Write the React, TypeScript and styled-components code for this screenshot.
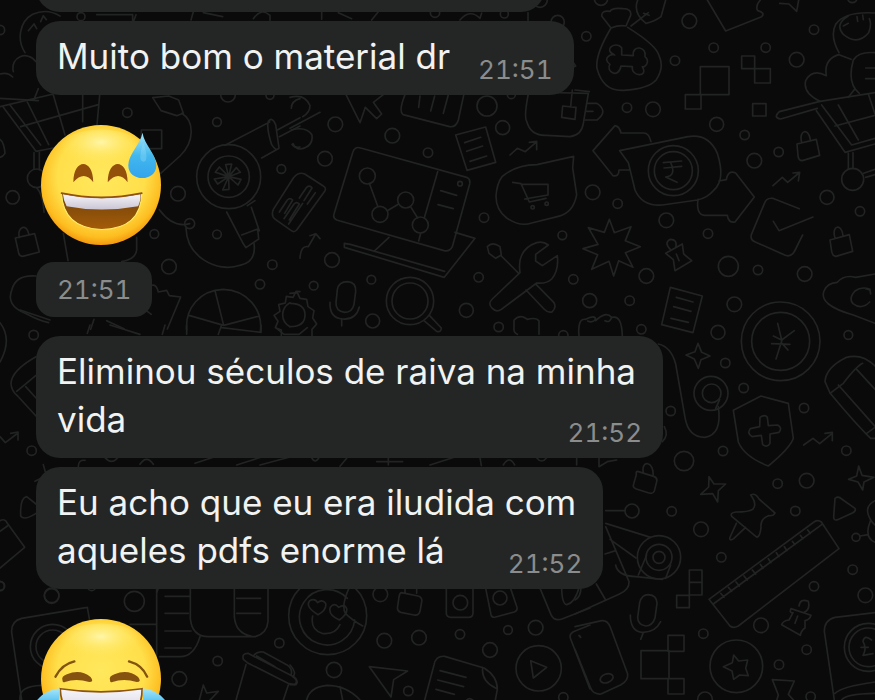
import React from "react";
import styled, { createGlobalStyle, css } from "styled-components";

const GlobalStyle = createGlobalStyle`
  body {
    margin: 0;
    background: #0a0a0a;
    font-family: Inter, "Liberation Sans", sans-serif;
  }
`;

const Screen = styled.main`
  position: relative;
  height: 100vh;
  overflow: hidden;
  background: #0a0a0a;
`;

const Backdrop = styled.svg`
  position: absolute;
  inset: 0;
  width: 100%;
  height: 100%;
  fill: none;
  stroke: #222323;
  stroke-width: 5;
  stroke-linecap: round;
  stroke-linejoin: round;
`;

const Messages = styled.ol`
  position: relative;
  display: flex;
  flex-direction: column;
  align-items: flex-start;
  gap: 9px;
  margin: 0;
  padding: 0 36px;
  list-style: none;
`;

const surface = css`
  background: #242626;
  color: #f1f2f2;
`;

const Bubble = styled.li`
  ${surface}
  box-sizing: border-box;
  padding: 11px 21px 15px;
  border-radius: 24px;
`;

const EarlierBubble = styled(Bubble)`
  width: 509px;
  max-width: 100%;
  height: 51px;
  margin-top: -39px;
`;

const Line = styled.span`
  display: block;
  padding-right: 6px;
  font-size: 35px;
  line-height: 48px;
  white-space: nowrap;
`;

const LastRow = styled.div`
  display: flex;
  align-items: flex-end;
  justify-content: space-between;
  gap: 22px;
`;

const Time = styled.time`
  color: #8b8d8d;
  font-size: 26px;
  line-height: 20px;
  font-variant-numeric: tabular-nums;
`;

const EmojiMessage = styled.li`
  display: flex;
  flex-direction: column;
  align-items: flex-start;
  gap: 17px;
  margin: 21px 0 10px;
`;

const EmojiArt = styled.svg`
  width: 120px;
  height: 120px;
  margin-left: 5px;
  overflow: visible;
`;

const TimePill = styled.div`
  ${surface}
  display: flex;
  align-items: center;
  height: 55px;
  padding: 0 21px;
  border-radius: 18px;
`;

type Dot = [number, number, number];

function Dots({ items }: { items: Dot[] }) {
  return (
    <>
      {items.map(([x, y, r]) => (
        <circle key={`${x}-${y}`} cx={x} cy={y} r={r} />
      ))}
    </>
  );
}

const topLeft: Dot[] = [
  [0, 90, 14], [243, 50, 12], [382, 338, 14], [651, 366, 13], [844, 507, 13], [38, 592, 20],
  [534, 581, 22], [463, 702, 13], [651, 703, 13], [507, 800, 22], [817, 794, 14],
  [780, 853, 14], [684, 284, 22], [810, 286, 12], [569, 671, 15], [110, 535, 28],
];

const topCentre: Dot[] = [
  [136, 373, 22], [307, 407, 22], [414, 458, 14], [105, 476, 22], [591, 318, 30],
  [638, 383, 21], [582, 653, 14], [817, 706, 13], [126, 780, 22], [244, 839, 13],
  [71, 857, 13], [248, 963, 21], [566, 832, 14], [850, 838, 14], [529, 931, 21],
  [626, 981, 14], [435, 38, 14], [643, 42, 12], [803, 66, 20], [750, 0, 22],
  [820, 1006, 14], [664, 284, 12],
];

const topRight: Dot[] = [
  [343, 63, 22], [34, 109, 14], [416, 143, 14], [572, 143, 14], [300, 182, 14],
  [717, 89, 14], [665, 179, 22], [156, 323, 14], [234, 328, 22], [425, 373, 21],
  [509, 405, 14], [611, 456, 14], [538, 482, 22], [53, 577, 22], [128, 611, 14],
  [756, 592, 21], [855, 634, 14], [274, 661, 22], [399, 701, 14], [460, 799, 30],
  [549, 810, 14], [689, 822, 22], [214, 828, 22], [44, 902, 21], [164, 902, 14],
  [478, 913, 22], [429, 997, 21], [199, 988, 14], [820, 1005, 13], [78, -4, 20],
  [832, -6, 14],
];

const bottomRight: Dot[] = [
  [451, 99, 14], [506, 174, 14], [287, 243, 14], [687, 234, 14], [444, 363, 14],
  [814, 362, 14], [327, 393, 29], [608, 461, 14], [695, 452, 22], [171, 543, 21],
  [290, 544, 14], [378, 598, 22], [661, 543, 14], [439, 682, 14], [833, 719, 14],
  [717, 769, 14], [871, 796, 22], [558, 886, 22], [385, 911, 14], [695, 959, 14],
  [612, 1004, 14], [843, 622, 12], [390, 1108, 22], [707, 1100, 14],
];

function Wallpaper() {
  return (
    <Backdrop viewBox="0 0 875 700" preserveAspectRatio="xMinYMin slice" aria-hidden="true">
      <g transform="scale(.33333)">
        <Dots items={topLeft} />
        {/* face, cloud and shopping cart */}
        <path d="M75 158C50 120 58 65 98 43Q140 24 180 48M85 92l17-20 8 14M122 65l8-18 9 12M40 215C30 170 82 150 108 185M0 222Q23 215 38 231M0 295l115 7M115 266l-12 30M0 320L160 282M10 322L108 454L160 444M30 315l92 120M62 380L295 314M82 306l64 128M160 285l35 120M248 285v80M299 285l-8 90M102 458v50M118 458v52M110 563q20 22 22 74" />
        <path d="M290 44h108v22M400 66l8-22M573 60l7-25M610 38l58 12M760 56q24-34 50-10v15" />
        <path d="M0 418q12 8 15 42-6 10-15 12M46 714l58-13 14 55-50 13q-10 0-12-10zM58 712c-8-30 22-45 29-8M424 390h61v56h-61zM190 700l14 82M410 712v38q-3 28-45 35" />
        {/* cable and plug */}
        <path d="M458 293l48-5 30 12 14 40-20 7-47-15zM545 340C583 362 585 425 540 468L482 520M478 629Q520 685 569 671M558 684C560 770 650 820 720 796q50-10 42-66" />
        {/* hair dryer */}
        <circle cx="686" cy="530" r="96" /><circle cx="686" cy="530" r="62" />
        <path d="M686 530l-9-36 18-2-9 38 23-27 12 14-35 13 37 8-9 17-28-25 1 38-19 2 18-40-33 22-10-15 43-7-40-13 12-16zM675 436l134-70M785 474l44-25M805 364q12-15 22 10l10 70q-8 12-22-10q-16-50-10-70zM832 390l68-37M838 410l62-32M874 325q0-22 26-29M876 433q8 12 24 8M680 636l48 92M754 622l24 70M728 728l10 15 38-26-3-30-48 18M742 617l23-15" />
        {/* torn paper and pie chart */}
        <path d="M108 828q-60-5-72 40-20 48 40 72 40 22 70 28M455 856q15-4 20 20l25-5 8 16 34 4-40 96M434 928l20 15M272 988l10-30M320 962l52 24" />
        <path d="M560 990C555 925 600 870 670 868C740 870 790 928 781 995M645 872l26 104-104-30M671 976l108-28" />
        <path d="M900 875l-12-1-9 18-20-3-3 20-20 5 4 20-18 12 12 18-8 19 18 7v24h20l4 20h20M870 908q-22 12-22 36t22 36" />
      </g>

      <g transform="translate(290 0) scale(.33333)">
        <Dots items={topCentre} />
        <path d="M95 36v22M145 38l40 18M245 60l20-25M510 60q30-35 60-5l5-16M714 38v24M847 184l10 14-12 6" />
        <path d="M0 292q45-12 60 25 0 20-22 33M0 385l90-48M4 390q45-12 62 15 4 35-35 42-15 0-22-16" />
        <path d="M168 284l42 84 16-46 34 34 15-14-25-35 30-23M345 284q-20 50-6 60l140 36q20 2 26-20l16-74M390 288l-4 34M434 288l-12 45M475 284l-15 56M716 276q-15 75-6 88 12 45 60 42l70 4q35-5 40-40l15-90zM847 270l-5 50M818 318l40 4-3 36-40-6z" />
        {/* receipt, trend line, cart in speech bubble */}
        <path d="M497 405l90-24 30 106-86 24zM524 428l48-16M530 454l48-16M540 484l50-16M660 465l22-20 24 10 32-28M718 427l22-3v25M636 530q40-35 105-36l110-25-3 35 12 80q-10 55-55 65l-80 20q-35 12-75-15-32-24-32-65 2-38 18-59zM668 547l25 4 25 55 50-11M696 553h78v32l-70 12" />
        <circle cx="728" cy="622" r="5" /><circle cx="770" cy="611" r="5" />
        {/* laptop with node chart */}
        <path d="M188 458q5-20 24-14l318 88q12 5 9 20l-52 188q-8 16-25 12L140 660q-12-6-8-18zM443 515l-40 138M238 550l25 68M292 632l34-20M363 622l20 32M392 700l-6 23M452 572l48 14M444 614l46 12M495 697l60 18-92 117-300-90v-12l18 3 283 81M297 712l-45 42" />
        <circle cx="232" cy="528" r="24" /><circle cx="270" cy="643" r="24" /><circle cx="347" cy="600" r="24" /><circle cx="391" cy="675" r="24" /><circle cx="510" cy="551" r="7" />
        {/* wrench and brush */}
        <path d="M592 740q15-17 38 0l4 25-17 10-20-15zM634 768l50 50M690 818q-10-70 50-90 20-5 35 7l-38 28v20l20 14 45-30q5 45-17 70-15 15-45 12L634 928q-15 10-27-3-15-14 0-28zM738 853l54 55q8 15-5 27-13 5-25-8l-54-57" />
        {/* comb-shaped chip and trend arrow */}
        <path d="M-50 628L10 534q16-20 34-12l56 36q10 6 4 16L20 690q-8 8-16 2l-48-34q-14-10-6-30zM-32 636l24-36q8-8 16 0l-24 40M-18 656l30-44q8-8 16 0l-30 48M-4 672l42-62M28 594l22-32q10-8 16 2l-24 38M52 612l24-34M30 775q2-40 25-35l22-38M60 707l17-6 13 15" />
        {/* gear, microphone, magnifier, folder */}
        <path d="M0 880l22-2 8 17 20 3 4 22 18 12-4 22 12 18-14 16v22l-23 8-8 15-35-3M0 910q45 0 45 35T0 980M173 845q26 2 24 30l-5 38q-5 24-28 24-28-4-26-30l4-38q4-24 31-24zM120 907q-2 48 38 50 40 3 50-36M155 958v20" />
        <circle cx="360" cy="903" r="71" /><circle cx="360" cy="903" r="54" />
        <path d="M402 962l38 32q14 4 14-10l-36-38M682 1003q-12-5-10-20v-22q12-14 28-10l12 7q28-7 35 5v40" />
      </g>

      <g transform="translate(575 0) scale(.33333)">
        <Dots items={topRight} />
        {/* bone bag */}
        <path d="M108 84L80 48q0-18 25-14 5-12 40-8 25 0 22 20l-14 32q-20-4-45 6Q60 165 66 205q18 70 80 66 75-5 98-32 25-38 8-72-6-30-94-85M168 78l52-40M188 0q-15 40 25 70 25-5 45-20l14-50M206 40l16 6" />
        <path d="M140 165l35 2c-5-34 42-28 35 3 18 16-2 34-8 30 20 34-35 30-30 0l-34-2c-8 42-48 14-33-5-28-20 10-34 14-28-38-16 4-44 21-22z" />
        <path d="M397 0l55 93 108-43q12-12-12-18-8-14 8-32M614 10l28 2 23 22 6-34" />
        <path d="M376 200h86v84h-86zM331 284h47v43h-47zM500 168h39v38h-39zM539 206h47v43h-47zM533 311h40v37h-40z" />
        <path d="M0 270l43 5M36 310h30q35 24 0 50H30M34 334h20" />
        {/* face with thumbs */}
        <path d="M792 158q-28-50-10-85 28-40 118-34M820 48q-42 25-15 55 42 35 76-5 10-25 2-42M805 78l15-8M846 50l2 14M863 45l2 14M735 304q-52-25-43-62 20-37 62-15-8-50 38-63l36 14M900 158q-50-4-65 22-20 70 18 100M872 204h28M872 236h28M840 266l-20 26" />
        {/* cart */}
        <path d="M900 278L735 304L613 335q-20 18 4 22l110-32M740 315l90 120 70-20M724 332l86 125 90-25M780 378l120-32M790 315l60 105M880 282l20 60M820 460v48M834 458v48M866 520l34-12M872 532l28-8" /><circle cx="833" cy="538" r="33" />
        {/* rupee tag with arrows */}
        <path d="M228 425q-6-26-22-26h-68q-5-20-18-22L54 452l60 75q18 4 18-17h30M134 452l205-42q62-10 88 50 25 80-10 110-20 24-50 30l-105 15q-60 5-82-45l-20-82zM432 543l22-4q5-30 28-20l56 72-58 75q-20 4-23-20h-70q-24-4-18-48" />
        <circle cx="295" cy="512" r="75" /><circle cx="295" cy="512" r="57" />
        <path d="M265 488l55-5M267 504l53-5M286 486q20 40-14 45l34 16" />
        {/* checkbox, padlocks, trend */}
        <path d="M673 626l-80-31q-20-2-25 16l-39 93q-4 16 12 22l90 40q18 6 28-13l24-48M595 664l17 28 102-41M594 557l28-25 16 15 34-28M654 519l20-2-4 26M666 432l58-14 10 48-52 16q-12 0-13-15zM680 428c-10-40 22-45 26-8M765 720l58-16 10 50-50 15q-10 0-13-15zM780 714c-12-38 20-45 24-8" />
        {/* star burst and clip */}
        <path d="M103 658l15 40 50-18-17 42 45 18-45 18 23 44-43-20-15 46-14-44-52 24 18-44-44-18 45-13-29-50 48 14zM286 748q-20-20 0-30 22 0 16 25M272 760l50-28 4 30 24 20-50 30-5-33zM304 762l8 20" />
        {/* receipt, coin, calendar, cloud */}
        <path d="M286 862l96 26-28 110-94-24zM304 892l50 14M296 920l52 14M288 955l52 12M12 1008q-5-54 20-50 28-15 30 0-10 12-24 5M62 962q30-30 48-10-5 18-20 10M112 952q28-8 30 56M900 970l-65-25q-105-30-88-72 10-25 40-26 20-24 55-15l58-10M885 868q-25-10-45 5-20 22-6 38 25 20 50-5M872 866l13 4 2 12" />
        <circle cx="617" cy="1024" r="118" /><circle cx="617" cy="1024" r="87" />
        <path d="M608 970l12 50 38-28M620 1020l-25-12M590 1031l55 2M621 1020l-18 57M621 1030l18 20" />
      </g>

      <g transform="translate(575 330) scale(.33333)">
        <Dots items={bottomRight} />
        <path d="M250 42q38 8 52 60l28 160q10 60 60 60 52-8 40-92M369 40l11 27 25 11-27 11-8 26-12-28-25-12 27-10z" />
        <circle cx="408" cy="190" r="51" /><circle cx="410" cy="190" r="28" />
        <path d="M422 236l12-28M268 290q14 26-6 45M72 385v25l25-15 28-5" />
        {/* shield */}
        <path d="M558 198l82 22 15 105q-10 30-75 83-72-28-90-72l-15-95zM555 262q15-10 22 0l3 25 28-2q15 8 4 22l-27 5v28q-8 14-22 4l-4-28-28 4q-16-10-5-24l28-6z" />
        {/* marker */}
        <path d="M900 108q-40-40-88-25-60 30-62 72l15 34q80 96 122 136h13M765 190l40-30q38-50 58-60M790 165l110 124M845 118l55 60M875 310l25-18M686 345l28-20 20 16 34-28M750 310l22-3v25" />
        {/* padlock, sparkles, pin, ruler */}
        <path d="M188 424l48 15q12 4 9 16l-7 28q-4 10-16 6l-38-12q-12-4-8-15l8-28q-2-10 4-10zM205 428c-8-40 34-35 29 10M402 440l15 22 35 0-22 20-2 34-15-25-36 2 24-22zM851 408l10 28 36 6-30 14-4 24-14-24-28-8 24-10z" />
        <path d="M527 495q15-8 25 12l48 42q-5 10-20 8-25 10-22 35-2 25-12 30l-75-62q-8-12 12-14 38 0 50-8 15-15-6-43zM484 580l-20 44q0 10 12 2l36-34M402 808l315-232q12-8 22 0l53 80-302 232q-15 8-25 0zM415 822l325-238M437 790l10 12M460 772l10 12M483 756l10 12M507 738l10 12M532 720l10 12M556 703l8 12M580 686l8 12M604 668l8 12M628 650l8 12M652 634l8 10M676 616l8 10M698 600l8 10" />
        <path d="M780 505q10-8 20 2l40 28q4 8-8 14l-44 20q-12 4-12-8zM900 512q-40 20-8 65l8 8M886 573q-20 50 14 64M855 618l25-4" />
        {/* camera */}
        <circle cx="252" cy="682" r="65" /><circle cx="252" cy="682" r="39" /><circle cx="252" cy="682" r="18" />
        <path d="M92 542h58M92 580l135 42M92 590l70 165q2 24-30 38L0 852M105 628l78 56M90 672l32-10M122 705q5 32 60 35l80 8M190 735l25-60M272 745l15-40M64 762l28 48" />
        {/* blocks, mic, phone, badge */}
        <path d="M343 720h38v75h-38zM343 757h38M305 796h38v37h-38zM198 962h84v84h-84zM279 916h48v48h-48zM279 1046h48v46h-48zM220 794q26 2 26 26l-6 44q-8 24-28 24-24-4-24-26l6-44q6-24 26-24zM166 855q0 48 34 52 40 2 57-32M205 908l-8 20M0 890l80-18q18-2 26 20l52 140q2 20-20 32l-60 28q-24 2-32-20L0 958M12 916l4 4" />
        <ellipse cx="95" cy="1045" rx="20" ry="13" transform="rotate(-20 95 1045)" />
        <circle cx="484" cy="1009" r="79" />
        <path d="M476 975l15 18 27-3-6 25 8 22-26-2-18 13-5-25-26-13 27-12zM0 810q18-10 18-40" />
        <path d="M648 836l60 20q-4 14-18 16v22q-12 8-14 22l-56-32q4-12 22-14l12-22q-12 2-6-12zM672 828q4-24 28-14 6 25-12 32M668 858l-8 22M592 1049l66 4-18 40 18 20M592 1049l18 46-6 20" />
        {/* pound note */}
        <path d="M900 848l-120 14q-32 8-32 42l30 206M780 1090q20-20 120-34M800 1110q10-18 100-20" /><circle cx="880" cy="952" r="72" /><circle cx="880" cy="952" r="58" />
        <path d="M890 930q-22-18-26 4 12 22 0 42l30-5M858 952h22" />
      </g>

      <g transform="translate(0 310) scale(.33333)">
        <Dots items={[[101, 75, 14], [95, 422, 14], [0, 828, 14], [155, 858, 22]]} />
        <path d="M60 0l90 30M0 38q38 50 0 118M108 140q-75 42-75 82 2 22 20 36l55 60M50 244l58-48M77 230l31 34M0 380l16 18 34-26M32 370l22-4v24M130 464l6 22 14 8M105 514l15-8M62 618q-2-55 18-58l28 22M62 618q10 15 46-8M0 632q15-8 22 8l52 72-74 62M0 664l22-16" />
      </g>

      <g transform="translate(0 570) scale(.33333)">
        <Dots items={[[155, 76, 22], [403, 94, 30], [0, 48, 13], [653, 273, 14], [838, 219, 14], [538, 327, 22], [275, 50, 12]]} />
        <path d="M262 112L65 145q-32 8-30 42l30 203M262 112l8 45M60 388q-4-40 65-42M390 163h78M470 55v200M470 70q4-16 10-18M495 79h76M495 130h70M495 183h78M495 234h78M571 50v95q5 55 55 55h140q35-10 38-45V50M703 50v90q4 50 50 58M710 85h72M710 130h72M600 200q-18 60-60 60h-62" />
        <circle cx="158" cy="230" r="67" /><circle cx="158" cy="230" r="50" />
        <path d="M730 268q-5-18 14-18l140 72q12 8 0 22l-20-4-122-62zM760 258q10-15 30-12l70 38q18 12 14 28M738 284l-30 106M865 345l-15 45M770 258l55 32M610 345l10 24 35-5-25 26M610 345l-12 45" />
      </g>

      <g transform="translate(290 570) scale(.33333)">
        <Dots items={[[271, 73, 22], [283, 212, 22], [387, 203, 22], [510, 193, 14], [654, 180, 13], [737, 173, 22], [600, 240, 22], [132, 300, 23], [355, 363, 14], [820, 382, 14], [511, 98, 22], [630, 84, 21]]} />
        <circle cx="113" cy="137" r="117" />
        <path d="M172 85a83 83 0 1 0 22 65M178 52q-25 54-12 78 20 20 52 38M84 134q-40-24-25-42 16-8 24 6 12-12 24 2 4 20-23 34zM148 150q-35-16-27-38 12-16 25 0 18-12 24 4 4 16-22 34zM68 138q-8 40 28 52 40 5 54-26M345 50v20M380 50v20M334 68l50 10q14 4 11 18l-5 28q-4 14-18 11l-40-8q-12-4-9-18l4-28q2-12 7-13zM469 50v80q0 12 14 12h52q14 0 14-14V50M586 50l17 84q3 10 14 7l56-15q10-4 8-14L660 50M748 50l35 84q10 22 35 12l82-32M815 50q0 50 15 54 25-6 38-54" />
        <path d="M0 285q22 24 8 35 20 14 10 24H0M238 290l115 13-42 26-8 52zM50 390q8-38 60-44 60 0 100 44M150 350l8 40M404 390l28-105q5-28 32-26l118 35q40 24 40 64l-6 32M578 292q-5 42 40 63M450 302l78 20M443 330l78 20M438 358l55 15M900 165l-50 20q-14 8-8 22l58 150M868 198l4 4" />
        <circle cx="746" cy="295" r="68" /><path d="M722 272l8 52 40-32z" />
        <path d="M530 390q8-8 18 0" />
      </g>
      {/* slivers visible between the bubbles */}
      <g transform="translate(30 325) scale(.33333)">
        <path d="M180 0l-8 25M240 0l90 28M405 0l-8 28M470 0v28M575 0l-10 28M575 8l118 14V0M740 10l22 18h45l25-20M145 424q0-20 20-18M225 398q20 22 38 0M330 418q20-30 40 0M495 415l55-18M620 420l75-24M690 420l90-24M845 398q10 20 22 0" />
        <path d="M930 424l20-24M1040 410h78M1075 400v20M1200 420l75-24M1350 398l4 24M1420 420q18-30 34 0M1520 398q15 20 30 0M1640 400v20" />
      </g>
    </Backdrop>
  );
}

function FaceGradients({ id }: { id: string }) {
  return (
    <>
      <radialGradient id={`${id}-face`} cx=".5" cy=".43" r=".59">
        <stop offset="0" stopColor="#ffe85d" />
        <stop offset=".62" stopColor="#ffdf4a" />
        <stop offset=".86" stopColor="#fdbd20" />
        <stop offset="1" stopColor="#f28b08" />
      </radialGradient>
      <radialGradient id={`${id}-shine`} cx=".5" cy=".3" r=".5">
        <stop offset="0" stopColor="#fff6a8" />
        <stop offset="1" stopColor="#ffe75b" stopOpacity="0" />
      </radialGradient>
      <linearGradient id={`${id}-water`} x1="0" y1="0" x2="0" y2="1">
        <stop offset="0" stopColor="#a7e7fa" />
        <stop offset=".5" stopColor="#43b8ee" />
        <stop offset="1" stopColor="#32a4ed" />
      </linearGradient>
      <linearGradient id={`${id}-teeth`} x1="0" y1="0" x2="0" y2="1">
        <stop offset="0" stopColor="#f7f5fb" />
        <stop offset="1" stopColor="#c9c5d3" />
      </linearGradient>
    </>
  );
}

function SweatSmile() {
  return (
    <EmojiArt viewBox="33 47 356 356" role="img" aria-label="Grinning face with sweat">
      <defs>
        <FaceGradients id="sweat" />
        <linearGradient id="sweat-mouth" x1="0" y1="0" x2="0" y2="1">
          <stop offset="0" stopColor="#70410c" />
          <stop offset="1" stopColor="#a45c08" />
        </linearGradient>
        <clipPath id="sweat-clip">
          <path d="M94 248q118 27 238 0-2 107-119 109Q98 353 94 248z" />
        </clipPath>
      </defs>
      <circle cx="211" cy="225" r="178" fill="url(#sweat-face)" />
      <ellipse cx="211" cy="124" rx="128" ry="64" fill="url(#sweat-shine)" />
      <path d="M129 217c0-72 59-72 59 0q-27-37-59 0zM231 217c0-72 59-72 59 0q-27-37-59 0z" fill="#92500b" />
      <path d="M94 248q118 27 238 0-2 107-119 109Q98 353 94 248z" fill="url(#sweat-mouth)" stroke="#fff06a" strokeWidth="3" />
      <g clipPath="url(#sweat-clip)">
        <path d="M98 252q115 24 230 0 2 20-7 36-110 20-212 0-10-18-11-36z" fill="url(#sweat-teeth)" />
      </g>
      <path d="M94 249q118 25 238 0" fill="none" stroke="#92510f" strokeWidth="5" strokeLinecap="round" />
      <path d="M334 70C328 104 292 134 292 167c0 50 83 50 83 0 0-34-36-62-41-97z" fill="url(#sweat-water)" />
      <path d="M336 100q14 34 8 52-10 10-16-4-2-18 8-48z" fill="#a5e5fb" opacity=".3" />
    </EmojiArt>
  );
}

function TearsOfJoy() {
  return (
    <EmojiArt viewBox="33 57 356 356" role="img" aria-label="Face with tears of joy">
      <defs>
        <FaceGradients id="joy" />
      </defs>
      <circle cx="211" cy="235" r="178" fill="url(#joy-face)" />
      <ellipse cx="211" cy="134" rx="128" ry="64" fill="url(#joy-shine)" />
      <g fill="none" stroke="#835310" strokeWidth="7" strokeLinecap="round">
        <path d="M76 228q20-37 56-45M294 183q38 10 54 45" />
      </g>
      <path d="M97 240q-5-13 13-19 40-16 70 8 12 15-4 15-39-12-72 0-7 2-7-4zM238 240q-5-13 13-19 40-16 70 8 12 15-4 15-39-12-72 0-7 2-7-4z" fill="#865210" />
      <path d="M90 264q120 18 243 0 0 103-122 105Q94 365 90 264z" fill="url(#joy-teeth)" stroke="#8e5414" strokeWidth="5" />
      <path d="M89 263C60 263 15 287 7 328q0 45 45 32 35-22 37-97zM335 263c29 0 72 24 80 65 0 45-45 32-50 22-26-22-30-47-30-87z" fill="url(#joy-water)" />
    </EmojiArt>
  );
}

interface TextMessageProps {
  lines: string[];
  time: string;
}

function TextMessage({ lines, time }: TextMessageProps) {
  return (
    <Bubble>
      {lines.slice(0, -1).map((line) => (
        <Line key={line}>{line}</Line>
      ))}
      <LastRow>
        <Line>{lines[lines.length - 1]}</Line>
        <Time dateTime={time}>{time}</Time>
      </LastRow>
    </Bubble>
  );
}

export default function App() {
  return (
    <>
      <GlobalStyle />
      <Screen>
        <Wallpaper />
        <Messages>
          <EarlierBubble />
          <TextMessage lines={["Muito bom o material dr"]} time="21:51" />
          <EmojiMessage>
            <SweatSmile />
            <TimePill>
              <Time dateTime="21:51">21:51</Time>
            </TimePill>
          </EmojiMessage>
          <TextMessage lines={["Eliminou séculos de raiva na minha", "vida"]} time="21:52" />
          <TextMessage lines={["Eu acho que eu era iludida com", "aqueles pdfs enorme lá"]} time="21:52" />
          <EmojiMessage>
            <TearsOfJoy />
          </EmojiMessage>
        </Messages>
      </Screen>
    </>
  );
}
